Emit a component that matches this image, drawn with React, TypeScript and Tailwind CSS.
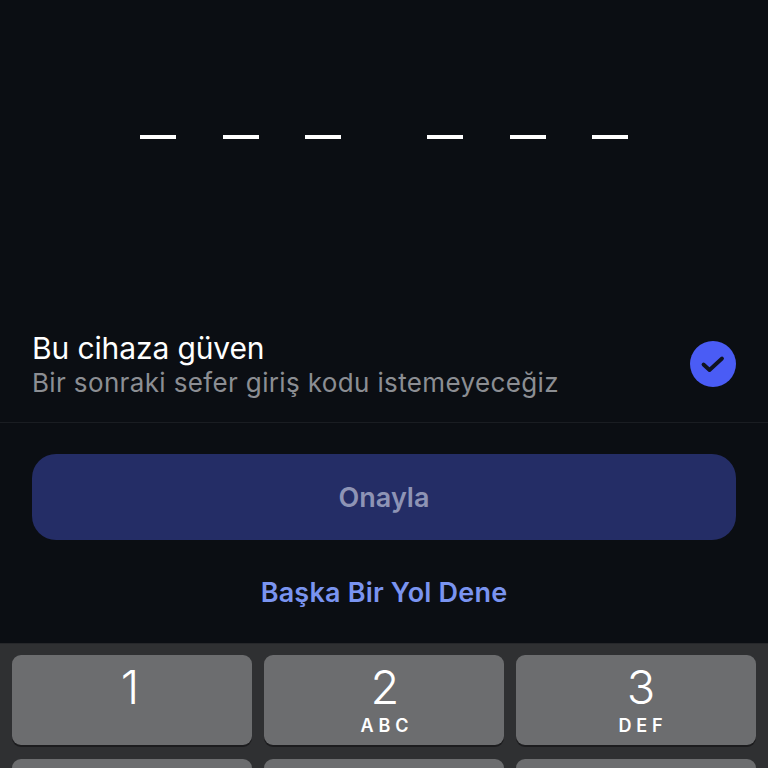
import React from "react";

const font = { fontFamily: "Inter, 'Liberation Sans', sans-serif" };

function Dash() {
  return <div className="w-[36px] h-[4px] bg-white" />;
}

function Key({ n, sub, shift = "" }: { n?: string; sub?: string; shift?: string }) {
  return (
    <div className={"h-[90px] shrink-0 rounded-[9px] bg-[#6c6d6f] shadow-[0_2px_0_#1c1c1e] flex flex-col items-center text-white " + shift}>
      <div className="h-[49px] mt-[7px] text-[47px] leading-[49px] font-light">{n}</div>
      <div className="mt-[5px] text-[18px] leading-[20px] font-semibold tracking-[0.27em] pl-[4px]">{sub}</div>
    </div>
  );
}

export default function App() {
  return (
    <div className="w-[768px] h-[768px] overflow-hidden bg-[#0b0e13] flex flex-col" style={font}>
      <div className="h-[135px] shrink-0" />
      <div className="h-[4px] shrink-0 flex pl-[140px]">
        <div className="flex gap-[46.5px]"><Dash /><Dash /><Dash /></div>
        <div className="flex gap-[46.5px] ml-[86px]"><Dash /><Dash /><Dash /></div>
      </div>
      <div className="h-[191px] shrink-0" />
      <div className="h-[93px] shrink-0 flex items-start justify-between pl-[32px] pr-[32px] border-b border-[#1a1d22]">
        <div>
          <div className="text-[30px] leading-[36px] text-white tracking-[-0.12px]">Bu cihaza güven</div>
          <div className="text-[26px] leading-[34px] text-[#8c8e93] tracking-[0.36px]">Bir sonraki sefer giriş kodu istemeyeceğiz</div>
        </div>
        <div className="mt-[11px] w-[46px] h-[46px] rounded-full bg-[#4a5cf5] flex items-center justify-center">
          <svg width="26" height="26" viewBox="0 0 26 26" fill="none" stroke="#10131f" strokeWidth="3.8" strokeLinecap="round" strokeLinejoin="round">
            <path d="M3.5 13.5 L9.5 19 L22 7.5" />
          </svg>
        </div>
      </div>
      <div className="px-[32px] pt-[31px] flex flex-col items-center">
        <div className="w-full h-[86px] pt-[2px] rounded-[24px] bg-[#242d66] flex items-center justify-center text-[27px] font-semibold text-[#8e94b5]">Onayla</div>
        <div className="mt-[34px] h-[36px] leading-[37px] text-[27px] font-semibold text-[#7a94f0] tracking-[0.2px]">Başka Bir Yol Dene</div>
      </div>
      <div className="mt-[33px] flex-1 bg-[#2f3032] border-t border-[#26272a] px-[12px] pt-[11px] grid grid-cols-3 gap-x-[12px] gap-y-[14px] content-start">
        <Key n="1" shift="pr-[4px]" />
        <Key n="2" sub="ABC" shift="pl-[2px]" />
        <Key n="3" sub="DEF" shift="pl-[10px]" />
        <Key />
        <Key />
        <Key />
      </div>
    </div>
  );
}
